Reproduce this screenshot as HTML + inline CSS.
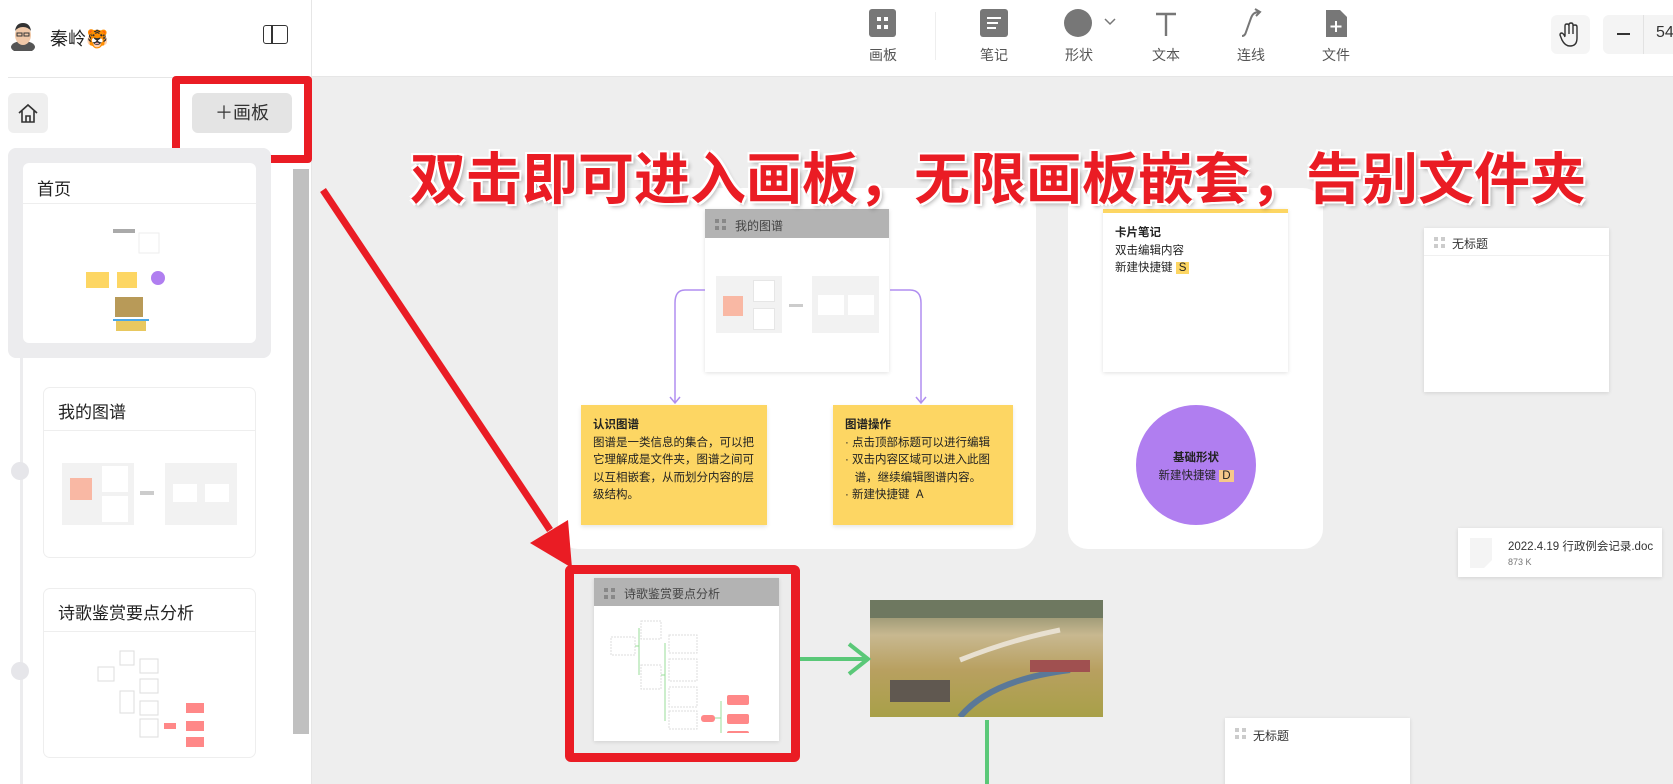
<!DOCTYPE html>
<html><head><meta charset="utf-8"><style>
*{margin:0;padding:0;box-sizing:border-box}
html{overflow:hidden;width:1673px;height:784px}
body{width:1673px;height:784px;overflow:hidden;position:relative;background:#eeeeee;font-family:"Liberation Sans","Noto Sans CJK SC",sans-serif;color:#222}
.a{position:absolute}
.card{position:absolute;background:#fff;box-shadow:0 1px 4px rgba(0,0,0,.12)}
.lbl{position:absolute;font-size:14px;color:#555;transform:translateX(-50%)}
.yn{position:absolute;background:#fdd663;font-size:11.5px;line-height:17.5px;padding:12px 12px;color:#222;box-shadow:0 2px 4px rgba(0,0,0,.1)}
.hd{position:absolute;left:0;right:0;top:0;background:#b3b3b3;height:29px;font-size:12px;color:#444;padding:8px 0 0 30px}
.dots{position:absolute;left:10px;top:10px;width:11px;height:11px;background:
linear-gradient(#888,#888) 0 0/4px 4px no-repeat,linear-gradient(#888,#888) 7px 0/4px 4px no-repeat,linear-gradient(#888,#888) 0 7px/4px 4px no-repeat,linear-gradient(#888,#888) 7px 7px/4px 4px no-repeat}
.dl{background:linear-gradient(#ccc,#ccc) 0 0/4px 4px no-repeat,linear-gradient(#ccc,#ccc) 7px 0/4px 4px no-repeat,linear-gradient(#ccc,#ccc) 0 7px/4px 4px no-repeat,linear-gradient(#ccc,#ccc) 7px 7px/4px 4px no-repeat}
</style></head><body>
<div class="a" style="left:0;top:0;width:1673px;height:77px;background:#fff;border-bottom:1px solid #e6e6e6"></div>
<div class="a" style="left:0;top:0;width:312px;height:784px;background:#fff;border-right:1px solid #e6e6e6"></div>
<div class="a" style="left:8px;top:77px;width:304px;height:1px;background:#e6e6e6"></div>
<svg class="a" style="left:10px;top:21px" width="26" height="30" viewBox="0 0 26 30"><ellipse cx="13" cy="26" rx="12" ry="6" fill="#555"/><ellipse cx="13" cy="14" rx="8" ry="10" fill="#f0c8a8"/><path d="M5 10 Q6 2 13 2 Q20 2 21 10 Q18 6 13 6 Q8 6 5 10Z" fill="#333"/><rect x="7" y="12" width="5" height="3" fill="none" stroke="#333"/><rect x="14" y="12" width="5" height="3" fill="none" stroke="#333"/></svg>
<div class="a" style="left:50px;top:25px;font-size:18px;color:#222">秦岭🐯</div>
<div class="a" style="left:263px;top:25px;width:25px;height:19px;border:1.6px solid #333;border-radius:3px"></div>
<div class="a" style="left:271px;top:25px;width:1.6px;height:19px;background:#333"></div>
<div class="a" style="left:8px;top:93px;width:40px;height:40px;background:#efefef;border-radius:6px"></div>
<svg class="a" style="left:17px;top:102px" width="22" height="22" viewBox="0 0 22 22" fill="none" stroke="#333" stroke-width="1.6"><path d="M2 11 L11 3 L20 11 M5 9 V20 H17 V9 M9 20 V14 H13 V20"/></svg>
<div class="a" style="left:192px;top:93px;width:100px;height:40px;background:#e4e4e4;border-radius:6px;font-size:18px;text-align:center;line-height:40px;color:#333">＋画板</div>
<div class="a" style="left:172px;top:76px;width:140px;height:87px;border:8px solid #ea1c24;border-radius:4px"></div>
<div class="a" style="left:8px;top:148px;width:263px;height:210px;background:#ececee;border-radius:8px"></div>
<div class="a" style="left:20px;top:358px;width:3px;height:426px;background:#ececee"></div>
<div class="a" style="left:11px;top:462px;width:18px;height:18px;border-radius:50%;background:#e6e6ea"></div>
<div class="a" style="left:11px;top:662px;width:18px;height:18px;border-radius:50%;background:#e6e6ea"></div>
<div class="card" style="left:23px;top:163px;width:233px;height:180px;border-radius:6px;box-shadow:none">
<div style="padding:12px 14px;font-size:17px;border-bottom:1px solid #eee;height:41px">首页</div>
<svg class="a" style="left:50px;top:64px" width="140" height="110"><rect x="40" y="2" width="22" height="4" fill="#aaa"/><rect x="66" y="6" width="20" height="20" fill="#fff" stroke="#eee"/><rect x="13" y="45" width="23" height="16" fill="#fdd663"/><rect x="44" y="45" width="20" height="16" fill="#fdd663"/><circle cx="85" cy="51" r="7" fill="#b07ef0"/><rect x="42" y="70" width="28" height="20" fill="#b89a58"/><rect x="43" y="92" width="30" height="12" fill="#e8c860"/><rect x="40" y="92" width="36" height="2" fill="#4aa8e8"/></svg>
</div>
<div class="card" style="left:44px;top:388px;width:211px;height:169px;border-radius:6px;box-shadow:0 0 0 1px #eee">
<div style="padding:10px 14px;font-size:17px;border-bottom:1px solid #eee;height:43px">我的图谱</div>
<div class="a" style="left:18px;top:75px;width:72px;height:62px;background:#f2f2f2"></div>
<div class="a" style="left:26px;top:90px;width:22px;height:22px;background:#f9b8a4"></div>
<div class="a" style="left:58px;top:78px;width:26px;height:26px;background:#fff"></div>
<div class="a" style="left:58px;top:108px;width:26px;height:26px;background:#fff"></div>
<div class="a" style="left:96px;top:103px;width:14px;height:4px;background:#ccc"></div>
<div class="a" style="left:121px;top:75px;width:72px;height:62px;background:#f2f2f2"></div>
<div class="a" style="left:129px;top:96px;width:24px;height:18px;background:#fff"></div>
<div class="a" style="left:161px;top:96px;width:24px;height:18px;background:#fff"></div>
</div>
<div class="card" style="left:44px;top:589px;width:211px;height:168px;border-radius:6px;box-shadow:0 0 0 1px #eee">
<div style="padding:10px 14px;font-size:17px;border-bottom:1px solid #eee;height:43px">诗歌鉴赏要点分析</div>
<svg class="a" style="left:50px;top:60px" width="120" height="100"><g fill="#fff" stroke="#ddd"><rect x="4" y="18" width="16" height="14"/><rect x="26" y="2" width="14" height="14"/><rect x="26" y="42" width="14" height="22"/><rect x="46" y="10" width="18" height="14"/><rect x="46" y="30" width="18" height="14"/><rect x="46" y="52" width="18" height="14"/><rect x="46" y="70" width="18" height="18"/></g><g fill="#f88"><rect x="70" y="74" width="12" height="6"/><rect x="92" y="54" width="18" height="10"/><rect x="92" y="72" width="18" height="10"/><rect x="92" y="88" width="18" height="10"/></g></svg>
</div>
<div class="a" style="left:293px;top:169px;width:16px;height:565px;background:#c0c0c0"></div>
<svg class="a" style="left:869px;top:9px" width="27" height="28"><rect width="27" height="28" rx="3" fill="#777"/><rect x="8" y="8" width="4" height="4" fill="#fff"/><rect x="15" y="8" width="4" height="4" fill="#fff"/><rect x="8" y="16" width="4" height="4" fill="#fff"/><rect x="15" y="16" width="4" height="4" fill="#fff"/></svg>
<div class="lbl" style="left:883px;top:45px">画板</div>
<div class="a" style="left:935px;top:12px;width:1px;height:48px;background:#eee"></div>
<svg class="a" style="left:980px;top:9px" width="28" height="28"><rect width="28" height="28" rx="3" fill="#777"/><rect x="7" y="8" width="14" height="2" fill="#fff"/><rect x="7" y="13" width="11" height="2" fill="#fff"/><rect x="7" y="18" width="9" height="2" fill="#fff"/></svg>
<div class="lbl" style="left:994px;top:45px">笔记</div>
<div class="a" style="left:1064px;top:9px;width:28px;height:28px;border-radius:50%;background:#777"></div>
<svg class="a" style="left:1104px;top:18px" width="12" height="8"><path d="M1 1 L6 6 L11 1" stroke="#777" stroke-width="1.5" fill="none"/></svg>
<div class="lbl" style="left:1079px;top:45px">形状</div>
<svg class="a" style="left:1155px;top:12px" width="22" height="24"><path d="M1 2 H21 M11 2 V24" stroke="#777" stroke-width="2.4" fill="none"/></svg>
<div class="lbl" style="left:1166px;top:45px">文本</div>
<svg class="a" style="left:1239px;top:8px" width="26" height="30"><path d="M3 28 Q6 28 7 24 L12 10 Q14 4 20 4 M16 1 L21 4 L17 8" stroke="#777" stroke-width="2" fill="none"/></svg>
<div class="lbl" style="left:1251px;top:45px">连线</div>
<svg class="a" style="left:1326px;top:10px" width="21" height="27"><path d="M0 0 H14 L21 7 V27 H0Z" fill="#777"/><path d="M10 11 V22 M4.5 16.5 H15.5" stroke="#fff" stroke-width="2"/></svg>
<div class="lbl" style="left:1336px;top:45px">文件</div>
<svg class="a" style="left:1558px;top:22px" width="24" height="26" viewBox="0 0 24 26" fill="none" stroke="#333" stroke-width="1.4"><path d="M7 14 V4 Q7 2 9 2 Q11 2 11 4 V12 M11 11 V2.5 Q11 1 13 1 Q15 1 15 3 V12 M15 12 V4 Q15 3 17 3 Q19 3 19 5 V16 Q19 24 12 24 Q7 24 4 18 L2 13 Q2 11 4 11 Q6 12 7 15"/></svg>
<div class="a" style="left:1551px;top:15px;width:39px;height:39px;background:rgba(0,0,0,.04);border-radius:6px"></div>
<div class="a" style="left:1603px;top:15px;width:70px;height:39px;background:#f4f4f4;border-radius:6px 0 0 6px"></div>
<div class="a" style="left:1617px;top:33px;width:13px;height:1.5px;background:#333"></div>
<div class="a" style="left:1643px;top:15px;width:1px;height:39px;background:#e2e2e2"></div>
<div class="a" style="left:1656px;top:24px;font-size:16px;color:#333">54</div>
<div class="a" style="left:558px;top:188px;width:478px;height:361px;background:#fff;border-radius:20px"></div>
<div class="a" style="left:1068px;top:188px;width:255px;height:361px;background:#fff;border-radius:20px"></div>
<div class="card" style="left:705px;top:209px;width:184px;height:163px">
<div class="hd" style="height:29px">我的图谱<div class="dots"></div></div>
<div class="a" style="left:11px;top:67px;width:66px;height:57px;background:#f2f2f2"></div>
<div class="a" style="left:18px;top:87px;width:20px;height:20px;background:#f9b8a4"></div>
<div class="a" style="left:48px;top:71px;width:22px;height:22px;background:#fff;border:1px solid #e6e6e6"></div>
<div class="a" style="left:48px;top:99px;width:22px;height:22px;background:#fff;border:1px solid #e6e6e6"></div>
<div class="a" style="left:84px;top:95px;width:14px;height:3px;background:#ccc"></div>
<div class="a" style="left:107px;top:67px;width:67px;height:57px;background:#f2f2f2"></div>
<div class="a" style="left:113px;top:86px;width:26px;height:20px;background:#fff"></div>
<div class="a" style="left:143px;top:86px;width:26px;height:20px;background:#fff"></div>
</div>
<svg class="a" style="left:660px;top:285px" width="280" height="125" fill="none" stroke="#b08ef0" stroke-width="1.5"><path d="M45 5 H25 Q15 5 15 18 V118 M10 112 L15 118 L20 112"/><path d="M230 5 H250 Q261 5 261 18 V118 M256 112 L261 118 L266 112"/></svg>
<div class="yn" style="left:581px;top:405px;width:186px;height:120px"><b>认识图谱</b><br>图谱是一类信息的集合，可以把它理解成是文件夹，图谱之间可以互相嵌套，从而划分内容的层级结构。</div>
<div class="yn" style="left:833px;top:405px;width:180px;height:120px;padding-left:12px"><b>图谱操作</b><br>· 点击顶部标题可以进行编辑<br>· 双击内容区域可以进入此图<br>&nbsp;&nbsp;&nbsp;谱，继续编辑图谱内容。<br>· 新建快捷键 &nbsp;A</div>
<div class="card" style="left:1103px;top:209px;width:185px;height:163px;border-top:4px solid #fdd663;padding:12px 12px;font-size:11.5px;line-height:17.5px"><b>卡片笔记</b><br>双击编辑内容<br>新建快捷键 <span style="background:#fdd663;padding:0 3px">S</span></div>
<div class="a" style="left:1136px;top:405px;width:120px;height:120px;border-radius:50%;background:#b07ef0;font-size:11.5px;text-align:center;padding-top:44px;line-height:18px"><b>基础形状</b><br>新建快捷键 <span style="background:#f6c88a;padding:0 3px">D</span></div>
<div class="card" style="left:1424px;top:228px;width:185px;height:164px">
<div style="height:28px;border-bottom:1px solid #f0f0f0;font-size:12px;padding:7px 0 0 28px;color:#333;position:relative">无标题<div class="dots dl" style="left:10px;top:9px"></div></div></div>
<div class="card" style="left:1458px;top:528px;width:204px;height:49px">
<svg class="a" style="left:12px;top:10px" width="22" height="30"><path d="M0 0 H22 V22 L14 30 H0Z" fill="#f4f4f4"/></svg>
<div class="a" style="left:50px;top:10px;font-size:11.5px;color:#333">2022.4.19 行政例会记录.doc</div>
<div class="a" style="left:50px;top:29px;font-size:9px;color:#777">873 K</div></div>
<svg class="a" style="left:870px;top:600px" width="233" height="117"><defs><linearGradient id="g" x1="0" y1="0" x2="0" y2="1"><stop offset="0" stop-color="#7a8060"/><stop offset=".3" stop-color="#c8b890"/><stop offset=".6" stop-color="#b8a060"/><stop offset="1" stop-color="#a8a048"/></linearGradient></defs><rect width="233" height="117" fill="url(#g)"/><rect x="0" y="0" width="233" height="18" fill="#6e7860"/><path d="M90 60 Q140 40 190 30" stroke="#e8e0d0" stroke-width="5" fill="none"/><rect x="20" y="80" width="60" height="22" fill="#605850"/><path d="M90 117 Q120 80 200 70" stroke="#5a7898" stroke-width="6" fill="none"/><rect x="160" y="60" width="60" height="12" fill="#a05050"/></svg>
<div class="a" style="left:781px;top:657px;width:86px;height:4px;background:#5ac878"></div>
<svg class="a" style="left:845px;top:642px" width="28" height="34"><path d="M4 2 L23 17 L4 32" stroke="#5ac878" stroke-width="4" fill="none"/></svg>
<div class="a" style="left:985px;top:720px;width:4px;height:64px;background:#5ac878"></div>
<div class="card" style="left:1225px;top:718px;width:185px;height:80px">
<div style="height:28px;font-size:12px;padding:9px 0 0 28px;color:#333;position:relative">无标题<div class="dots dl" style="left:10px;top:10px"></div></div></div>
<div class="a" style="left:565px;top:565px;width:235px;height:197px;border:9px solid #ea1c24;border-radius:6px;background:#ececec"></div>
<div class="card" style="left:594px;top:578px;width:185px;height:163px">
<div class="hd" style="height:28px;font-size:12px;padding-top:7px">诗歌鉴赏要点分析<div class="dots"></div></div>
<svg class="a" style="left:15px;top:35px" width="160" height="120"><g fill="#fff" stroke="#ddd" stroke-dasharray="2 1"><rect x="2" y="24" width="24" height="18"/><rect x="32" y="8" width="20" height="18"/><rect x="32" y="52" width="20" height="24"/><rect x="60" y="22" width="28" height="18"/><rect x="60" y="46" width="28" height="22"/><rect x="60" y="74" width="28" height="20"/><rect x="60" y="98" width="28" height="18"/></g><g fill="#f88"><rect x="92" y="102" width="14" height="7" rx="3"/><rect x="118" y="82" width="22" height="10" rx="2"/><rect x="118" y="101" width="22" height="10" rx="2"/><rect x="118" y="118" width="22" height="10" rx="2"/></g><path d="M26 33 H30 V15 M30 33 V62 M52 62 H56 V30 M56 62 V108 M106 105 H112 V88 M112 105 V122" stroke="#9d9" fill="none"/></svg>
</div>
<svg class="a" style="left:300px;top:180px" width="300" height="400"><path d="M23 10 L250 350" stroke="#ea1c24" stroke-width="7"/><path d="M230 363 L272 388 L268 340Z" fill="#ea1c24"/></svg>
<div class="a" style="left:410px;top:135px;font-size:56px;font-weight:bold;color:#ea1c24;white-space:nowrap;font-family:'Noto Sans CJK SC',sans-serif;text-shadow:2px 2px 0 #fff,-2px -2px 0 #fff,2px -2px 0 #fff,-2px 2px 0 #fff,3px 3px 4px rgba(0,0,0,.3)">双击即可进入画板，无限画板嵌套，告别文件夹</div>
</body></html>
